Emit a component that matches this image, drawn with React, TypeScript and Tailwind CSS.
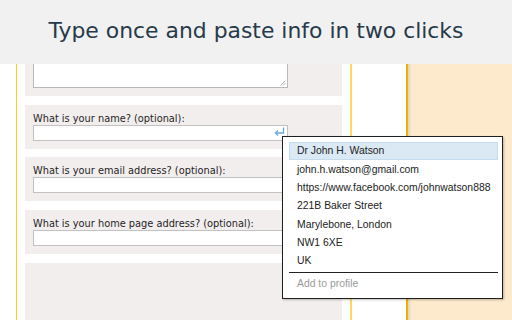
import React from "react";

const labelFont = { fontFamily: '"DejaVu Sans", Verdana, sans-serif' };

function Field({ label, showIcon }: { label: string; showIcon?: boolean }) {
  return (
    <div className="bg-[#f3eeee] px-2 pt-2 pb-2 h-[44px] shrink-0">
      <div
        className="text-[9.8px] leading-[12px] text-[#1e1e1e] whitespace-nowrap"
        style={labelFont}
      >
        {label}
      </div>
      <div className="relative h-4 w-[255px] bg-white border border-[#c2c2c2]">
        {showIcon && (
          <svg
            className="absolute right-[2px] top-[1px]"
            width="11"
            height="9"
            viewBox="0 0 11 9"
            fill="none"
            stroke="#6aa6dc"
            strokeWidth="1.3"
          >
            <path d="M9.5 0.5 V6 H1.8" />
            <path d="M4 3.5 L1.5 6 L4 8.5" />
          </svg>
        )}
      </div>
    </div>
  );
}

const items = [
  "Dr John H. Watson",
  "john.h.watson@gmail.com",
  "https://www.facebook.com/johnwatson888",
  "221B Baker Street",
  "Marylebone, London",
  "NW1 6XE",
  "UK",
];

export default function App() {
  return (
    <div className="relative w-[512px] h-[320px] overflow-hidden bg-white">
      <header className="h-16 bg-[#f1f1f1] flex items-center justify-center">
        <h1
          className="text-[21.9px] leading-none text-[#273a4a] whitespace-nowrap -mt-[2px]"
          style={{ fontFamily: '"DejaVu Sans", sans-serif' }}
        >
          Type once and paste info in two clicks
        </h1>
      </header>
      <div className="flex h-[256px]">
        <div className="w-4 shrink-0" />
        <div className="w-px shrink-0 bg-[#ffcc1a]" />
        <div className="w-2 shrink-0" />
        <div className="w-[317px] shrink-0 flex flex-col gap-[8.67px]">
          <div className="bg-[#f3eeee] px-2 pb-2 h-8 shrink-0">
            <div className="relative h-6 w-[255px] bg-white border border-t-0 border-[#b8b8b8]">
              <svg
                className="absolute right-[1px] bottom-[1px]"
                width="6"
                height="6"
                viewBox="0 0 6 6"
                stroke="#9a9a9a"
                strokeWidth="0.8"
              >
                <path d="M0.5 5.5 L5.5 0.5" />
                <path d="M3 5.5 L5.5 3" />
              </svg>
            </div>
          </div>
          <Field label="What is your name? (optional):" showIcon />
          <Field label="What is your email address? (optional):" />
          <Field label="What is your home page address? (optional):" />
          <div className="bg-[#f3eeee] flex-1" />
        </div>
        <div className="w-2 shrink-0" />
        <div className="w-[1.5px] shrink-0 bg-[#ffd760]" />
        <div className="w-[54px] shrink-0" />
        <div className="w-[2px] shrink-0 bg-[#f6ad00]" />
        <div className="w-[3px] shrink-0 bg-gradient-to-r from-[#dcd3c6] to-[#f8e6cb]" />
        <div className="flex-1 bg-[#fde9cb]" />
      </div>

      <div
        className="absolute left-[282px] top-[136px] w-[221px] h-[163px] bg-white border border-[#1f1f1f] pl-[6px] pr-[4px] pt-[5px] shadow-[1px_1px_2px_rgba(0,0,0,0.25)]"
        style={{ fontFamily: '"Liberation Sans", Arial, sans-serif' }}
      >
        {items.map((t, i) => (
          <div
            key={t}
            className={
              "h-[18.33px] flex items-center pl-[7px] text-[10.4px] text-[#222] whitespace-nowrap border " +
              (i === 0
                ? "bg-[#dbe9f5] border-[#c5dcef]"
                : "border-transparent")
            }
          >
            {t}
          </div>
        ))}
        <div className="mt-[1.7px] h-px bg-[#222]" />
        <div className="h-[22px] flex items-center pl-[8px] text-[10.4px] text-[#9a9a9a]">
          Add to profile
        </div>
      </div>
    </div>
  );
}
